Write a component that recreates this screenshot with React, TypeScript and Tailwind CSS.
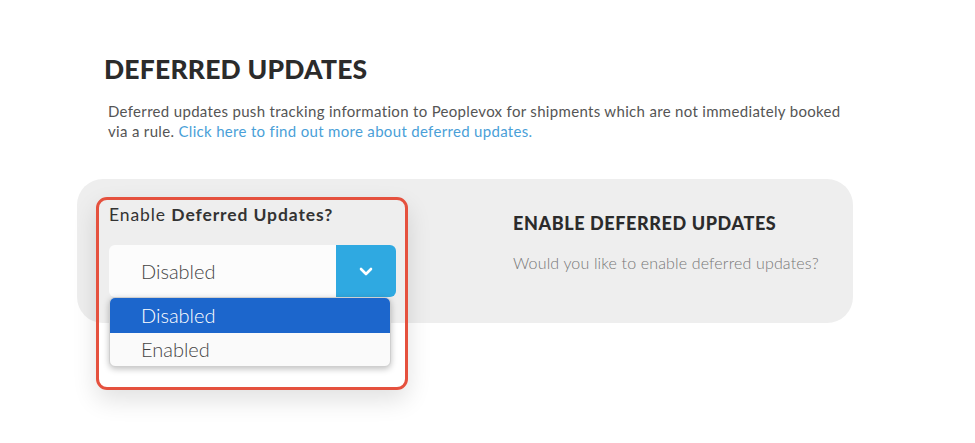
import React from "react";

export default function App() {
  const font = { fontFamily: "Lato, 'Open Sans', sans-serif" } as React.CSSProperties;
  return (
    <div className="w-[975px] h-[443px] bg-white overflow-hidden" style={font}>
      <div className="pl-[104px] pt-[52px]">
        <h1 className="text-[26.5px] leading-[34px] font-black text-[#2b2b2b] tracking-[0.2px]">DEFERRED UPDATES</h1>
        <p className="mt-[15px] ml-[4px] w-[760px] text-[15px] leading-[20px] text-[#555] tracking-[0.32px]">
          Deferred updates push tracking information to Peoplevox for shipments which are not immediately booked
          <br />
          via a rule. <span className="text-[#4a9fd8]">Click here to find out more about deferred updates.</span>
        </p>
      </div>
      <div className="ml-[77px] mt-[38px] w-[776px] h-[144px] rounded-[26px] bg-[#eeeeee] flex">
        <div className="relative w-[436px] pl-[32px] pt-[25px]">
          <div className="text-[17.5px] leading-[22px] text-[#333] tracking-[0.9px]">
            Enable <span className="font-bold">Deferred Updates?</span>
          </div>
          <div className="mt-[19px] flex w-[287px] h-[52px]">
            <div className="flex-1 bg-[#fcfcfc] rounded-l-[6px] flex items-center pl-[32px] text-[20px] font-light text-[#444]">
              Disabled
            </div>
            <div className="w-[60px] bg-[#2fa9e1] rounded-r-[6px] flex items-center justify-center">
              <svg width="14" height="9" viewBox="0 0 14 9" fill="none">
                <path d="M2 2 L7 7 L12 2" stroke="white" strokeWidth="2.6" strokeLinecap="round" strokeLinejoin="round" />
              </svg>
            </div>
          </div>
          <div className="absolute left-[32px] top-[118px] w-[282px] bg-[#fafafa] rounded-[6px] border border-[#cfcfcf] shadow-[0_2px_6px_rgba(0,0,0,0.25)] overflow-hidden text-[20px] font-light">
            <div className="h-[35px] bg-[#1c66cc] text-white flex items-center pl-[31px] pb-[2px]">Disabled</div>
            <div className="h-[33px] text-[#444] flex items-center pl-[31px] pb-[2px]">Enabled</div>
          </div>
          <div className="absolute left-[19px] top-[18px] w-[312px] h-[193px] border-[3px] border-[#e5513e] rounded-[11px] shadow-[0_10px_24px_rgba(0,0,0,0.12)] pointer-events-none"></div>
        </div>
        <div className="pt-[33px]">
          <div className="text-[18px] leading-[22px] font-black text-[#2b2b2b] tracking-[0.6px]">ENABLE DEFERRED UPDATES</div>
          <div className="mt-[19px] text-[16px] leading-[20px] text-[#777] font-light tracking-[0.15px]">Would you like to enable deferred updates?</div>
        </div>
      </div>
    </div>
  );
}
